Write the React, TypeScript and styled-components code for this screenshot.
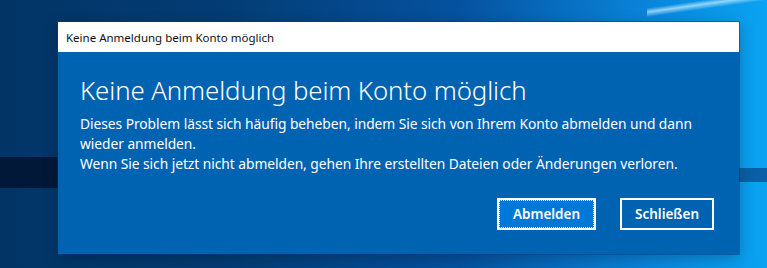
import styled, { createGlobalStyle } from "styled-components";

const Global = createGlobalStyle`
  html, body { margin: 0; padding: 0; }
  body { width: 767px; height: 268px; overflow: hidden; }
`;

const Desktop = styled.div`
  width: 767px;
  height: 268px;
  box-sizing: border-box;
  padding: 22px 0 0 58px;
  background:
    linear-gradient(180deg, transparent 157px, rgba(0, 14, 40, 0.75) 157px, rgba(0, 14, 40, 0.75) 188px, transparent 188px) left / 58px 100% no-repeat,
    linear-gradient(180deg, transparent 168px, #0b5fa6 168px, #0b5fa6 182px, transparent 182px) right / 28px 100% no-repeat,
    linear-gradient(172deg, transparent 8px, rgba(190, 235, 255, 0.75) 12px, transparent 17px) right top / 120px 40px no-repeat,
    linear-gradient(90deg, #023466 0%, #033d75 30%, #0552a0 60%, #0a86dc 85%, #0aa4f2 100%);
  font-family: "Noto Sans", "Open Sans", sans-serif;
`;

const Window = styled.div`
  width: 681px;
  height: 232px;
  display: flex;
  flex-direction: column;
  background: #0063b1;
  box-shadow: 0 0 0 1px rgba(0, 60, 120, 0.5), 0 4px 14px rgba(0, 0, 0, 0.25);
`;

const TitleBar = styled.div`
  height: 30px;
  flex: none;
  display: flex;
  align-items: center;
  padding-left: 8px;
  background: #ffffff;
  color: #111;
  font-size: 11.5px;
`;

const Body = styled.div`
  flex: 1;
  display: flex;
  flex-direction: column;
  padding: 20px 22px 24px 22px;
  color: #fff;
`;

const Heading = styled.h1`
  margin: 0 0 6px;
  font-size: 25.8px;
  font-weight: 300;
  line-height: 36px;
  letter-spacing: -0.1px;
`;

const Message = styled.p`
  margin: 0;
  width: 635px;
  font-size: 13.8px;
  line-height: 20px;
  letter-spacing: -0.05px;
`;

const Actions = styled.div`
  margin-top: auto;
  display: flex;
  justify-content: flex-end;
  gap: 24px;
  padding-right: 3px;
`;

const Button = styled.button<{ $primary?: boolean }>`
  height: 32px;
  box-sizing: border-box;
  padding: 0;
  border: 2px solid #fff;
  background: ${({ $primary }) => ($primary ? "#0078d7" : "transparent")};
  color: #fff;
  font-family: inherit;
  font-size: 13.5px;
  font-weight: 600;
  display: flex;
  align-items: center;
  justify-content: center;
  width: ${({ $primary }) => ($primary ? "99px" : "94px")};
`;

const Focus = styled.span`
  display: flex;
  align-items: center;
  justify-content: center;
  width: 100%;
  height: 100%;
  box-sizing: border-box;
  border: 1px dotted #000;
  outline: 1px dotted #fff;
  outline-offset: -1px;
`;

export default function App() {
  return (
    <>
      <Global />
      <Desktop>
        <Window>
          <TitleBar>Keine Anmeldung beim Konto möglich</TitleBar>
          <Body>
            <Heading>Keine Anmeldung beim Konto möglich</Heading>
            <Message>
              Dieses Problem lässt sich häufig beheben, indem Sie sich von Ihrem Konto abmelden und dann wieder anmelden.
              <br />
              Wenn Sie sich jetzt nicht abmelden, gehen Ihre erstellten Dateien oder Änderungen verloren.
            </Message>
            <Actions>
              <Button $primary>
                <Focus>Abmelden</Focus>
              </Button>
              <Button>Schließen</Button>
            </Actions>
          </Body>
        </Window>
      </Desktop>
    </>
  );
}
